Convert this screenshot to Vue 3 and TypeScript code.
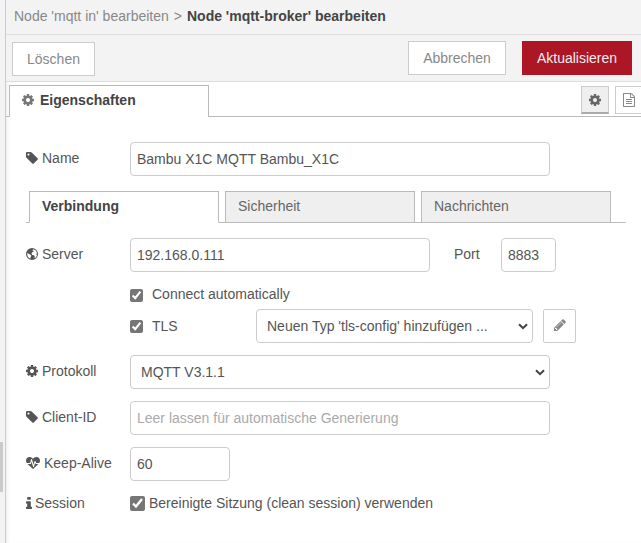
<script setup lang="ts">
import { ref } from 'vue'

interface Icon { box: string; d: string }

const icons: Record<string, Icon> = {
  cog: { box: '0 128 1536 1536', d: 'M1024 896q0-106-75-181t-181-75-181 75-75 181 75 181 181 75 181-75 75-181zm512-109v222q0 12-8 23t-20 13l-185 28q-19 54-39 91 35 50 107 138 10 12 10 25t-9 23q-27 37-99 108t-94 71q-12 0-26-9l-138-108q-44 23-91 38-16 136-29 186-7 28-36 28h-222q-14 0-24.5-8.5t-11.5-21.5l-28-184q-49-16-90-37l-141 107q-10 9-25 9-14 0-25-11-126-114-165-168-7-10-7-23 0-12 8-23 15-21 51-66.500t54-70.500q-27-50-41-99l-183-27q-13-2-21-12.500t-8-23.500v-222q0-12 8-23t19-13l186-28q14-46 39-92-40-57-107-138-10-12-10-24 0-10 9-23 26-36 98.500-107.500t94.500-71.500q13 0 26 10l138 107q44-23 91-38 16-136 29-186 7-28 36-28h222q14 0 24.500 8.500t11.500 21.500l28 184q49 16 90 37l142-107q9-9 24-9 13 0 25 10 129 119 165 170 7 8 7 22 0 12-8 23-15 21-51 66.500t-54 70.500q26 50 41 98l183 28q13 2 21 12.500t8 23.500z' },
  tag: { box: '0 128 1536 1536', d: 'M448 448q0-53-37.500-90.500t-90.500-37.500-90.500 37.500-37.500 90.500 37.500 90.500 90.500 37.500 90.500-37.500 37.500-90.500zm1067 576q0 53-37 90l-491 492q-39 37-91 37-53 0-90-37l-715-716q-38-37-64.500-101t-26.500-117v-416q0-52 38-90t90-38h416q53 0 117 26.500t102 64.500l715 714q37 39 37 91z' },
  globe: { box: '0 0 24 24', d: 'M12 0a12 12 0 1 0 0 24a12 12 0 1 0 0-24zM15 2.400L20 5.500L22 10L20.500 12.500L22 15L19 19.500L17 20.500L17.500 17L16 14.500L12.500 14L11 11L13 8L16 7L14.500 5.500L13 5L13.500 3.500zM3.200 10L5 11.500L8 13L10.500 15L10 17L9 18.500L8.500 21.500L5.500 19.500L3.300 16.500L2.300 12.500z' },
  pencil: { box: '0 128 1536 1536', d: 'M363 1536l91-91-235-235-91 91v107h128v128h107zm523-928q0-22-22-22-10 0-17 7l-542 542q-7 7-7 17 0 22 22 22 10 0 17-7l542-542q7-7 7-17zm-54-192l416 416-832 832h-416v-416zm683 96q0 53-37 90l-166 166-416-416 166-165q36-38 90-38 53 0 91 38l235 234q37 39 37 91z' },
  doc: { box: '0 0 1536 1792', d: 'M1468 380q28 28 48 76t20 88v1152q0 40-28 68t-68 28h-1344q-40 0-68-28t-28-68v-1600q0-40 28-68t68-28h896q40 0 88 20t76 48zm-444-244v376h376q-10-29-22-41l-313-313q-12-12-41-22zm384 1528v-1024h-416q-40 0-68-28t-28-68v-416h-768v1536h1280zm-1024-864q0-14 9-23t23-9h704q14 0 23 9t9 23v64q0 14-9 23t-23 9h-704q-14 0-23-9t-9-23v-64zm736 224q14 0 23 9t9 23v64q0 14-9 23t-23 9h-704q-14 0-23-9t-9-23v-64q0-14 9-23t23-9h704zm0 256q14 0 23 9t9 23v64q0 14-9 23t-23 9h-704q-14 0-23-9t-9-23v-64q0-14 9-23t23-9h704z' },
  info: { box: '0 128 640 1408', d: 'M640 1344v128q0 26-19 45t-45 19h-512q-26 0-45-19t-19-45v-128q0-26 19-45t45-19h64v-384h-64q-26 0-45-19t-19-45v-128q0-26 19-45t45-19h384q26 0 45 19t19 45v576h64q26 0 45 19t19 45zm-128-1152v192q0 26-19 45t-45 19h-256q-26 0-45-19t-19-45v-192q0-26 19-45t45-19h256q26 0 45 19t19 45z' },
  heart: { box: '0 128 1792 1536', d: 'M1280 1024h305q-5 6-10 10.500t-9 7.500l-3 4-623 600q-18 18-44 18t-44-18l-624-602q-5-2-21-20h369q22 0 39.500-13.500t22.500-34.500l70-281 190 667q6 20 23 33t39 13q21 0 38-13t23-33l146-485 56 112q18 35 57 35zm512-428q0 145-103 300h-369l-111-221q-8-17-25.500-27t-36.500-8q-45 5-56 46l-129 430-196-686q-6-20-23.500-33t-39.500-13-39 13.500-22 34.500l-116 464h-423q-103-155-103-300 0-220 127-344t351-124q62 0 126.500 21.500t120 58 95.500 68.500 76 68q36-36 76-68t95.500-68.500 120-58 126.500-21.500q224 0 351 124t127 344z' },
}

const tabs = ['Verbindung', 'Sicherheit', 'Nachrichten']
const activeTab = ref(0)
const name = ref('Bambu X1C MQTT Bambu_X1C')
const server = ref('192.168.0.111')
const port = ref('8883')
const autoConnect = ref(true)
const useTls = ref(true)
const clientId = ref('')
const keepAlive = ref('60')
const cleanSession = ref(true)
</script>

<template>
  <div class="editor">
    <div class="gutter"><div class="thumb"></div></div>
    <main class="tray">
      <header class="crumbs"><span>Node 'mqtt in' bearbeiten</span><span class="sep">&gt;</span><b>Node 'mqtt-broker' bearbeiten</b></header>
      <div class="toolbar">
        <button class="btn delete">Löschen</button>
        <button class="btn cancel">Abbrechen</button>
        <button class="btn primary">Aktualisieren</button>
      </div>
      <div class="top-tabs">
        <div class="lead"></div>
        <div class="main-tab">
          <svg :viewBox="icons.cog.box" width="12" height="12"><path :d="icons.cog.d" /></svg>Eigenschaften
        </div>
        <div class="rest">
          <button class="mini on"><svg :viewBox="icons.cog.box" width="12" height="12"><path :d="icons.cog.d" /></svg></button>
          <button class="mini"><svg :viewBox="icons.doc.box" width="12" height="14"><path :d="icons.doc.d" /></svg></button>
        </div>
      </div>

      <form class="form" @submit.prevent>
        <div class="row">
          <label class="lbl"><svg :viewBox="icons.tag.box" width="12" height="12"><path :d="icons.tag.d" /></svg>Name</label>
          <input v-model="name" class="field wide" type="text" />
        </div>

        <div class="tabs">
          <div v-for="(t, i) in tabs" :key="t" class="tab" :class="{ active: i === activeTab }" @click="activeTab = i">{{ t }}</div>
        </div>

        <div class="row">
          <label class="lbl"><svg :viewBox="icons.globe.box" width="12" height="12"><path fill-rule="evenodd" :d="icons.globe.d" /></svg>Server</label>
          <input v-model="server" class="field server" type="text" />
          <label class="port-label">Port</label>
          <input v-model="port" class="field port" type="text" />
        </div>
        <div class="row auto">
          <input v-model="autoConnect" type="checkbox" /><label>Connect automatically</label>
        </div>
        <div class="row tls">
          <input v-model="useTls" type="checkbox" /><label>TLS</label>
          <div class="picker">
            <select class="field config"><option>Neuen Typ 'tls-config' hinzufügen ...</option></select>
            <svg class="chevron" viewBox="0 0 10 7" width="10" height="7"><path d="M1 1.200l4 4 4-4" /></svg>
          </div>
          <button class="edit"><svg :viewBox="icons.pencil.box" width="12" height="12"><path :d="icons.pencil.d" /></svg></button>
        </div>
        <div class="row">
          <label class="lbl"><svg :viewBox="icons.cog.box" width="12" height="12"><path :d="icons.cog.d" /></svg>Protokoll</label>
          <div class="picker">
            <select class="field wide"><option>MQTT V3.1.1</option></select>
            <svg class="chevron" viewBox="0 0 10 7" width="10" height="7"><path d="M1 1.200l4 4 4-4" /></svg>
          </div>
        </div>
        <div class="row">
          <label class="lbl"><svg :viewBox="icons.tag.box" width="12" height="12"><path :d="icons.tag.d" /></svg>Client-ID</label>
          <input v-model="clientId" class="field wide" type="text" placeholder="Leer lassen für automatische Generierung" />
        </div>
        <div class="row">
          <label class="lbl"><svg :viewBox="icons.heart.box" width="14" height="12"><path :d="icons.heart.d" /></svg>Keep-Alive</label>
          <input v-model="keepAlive" class="field short" type="text" />
        </div>
        <div class="row session">
          <label class="lbl"><svg :viewBox="icons.info.box" width="6" height="12" preserveAspectRatio="none"><path :d="icons.info.d" /></svg>Session</label>
          <input v-model="cleanSession" class="big" type="checkbox" /><label>Bereinigte Sitzung (clean session) verwenden</label>
        </div>
      </form>
    </main>
  </div>
</template>

<style>
body { margin: 0; overflow: hidden; }
</style>

<style scoped>
* { box-sizing: border-box; }
.editor { display: flex; width: 641px; height: 543px; overflow: hidden; background: #fff; color: #555; font: 14px/20px "Liberation Sans", Arial, sans-serif; }
input, select, button { font: inherit; color: inherit; margin: 0; }
svg { fill: currentColor; display: block; flex: none; }
.gutter { width: 6px; flex: none; background: #f3f3f3; border-right: 1px solid #ccc; padding-top: 442px; }
.thumb { width: 3px; height: 50px; background: #cacaca; }
.tray { flex: 1; min-width: 0; box-shadow: inset 4px 0 5px -4px rgba(0, 0, 0, .12); }
.crumbs { height: 35px; padding: 6px 8px; background: #f3f3f3; border-bottom: 1px solid #ddd; color: #888; display: flex; white-space: nowrap; }
.sep { margin: 0 5px; }
.crumbs b { color: #444; }
.toolbar { height: 47px; background: #f3f3f3; border-bottom: 1px solid #ddd; display: flex; align-items: flex-start; padding: 6px 9px 0 6px; }
.btn { height: 34px; padding: 0; background: #fff; border: 1px solid #ccc; color: #888; }
.delete { width: 83px; margin: 1px auto 0 0; }
.cancel { width: 98px; margin-right: 16px; }
.primary { width: 110px; background: #ad1625; border-color: #ad1625; color: #eee; }
.top-tabs { display: flex; height: 35px; padding-top: 3px; }
.lead { width: 3px; border-bottom: 1px solid #bbb; }
.main-tab { width: 200px; border: 1px solid #bbb; border-bottom: 0; display: flex; align-items: center; gap: 6px; padding: 0 0 3px 12px; font-weight: bold; color: #444; background: #fff; }
.main-tab svg { color: #777; }
.rest { flex: 1; border-bottom: 1px solid #bbb; display: flex; justify-content: flex-end; gap: 6px; padding-top: 1px; }
.mini { width: 28px; height: 28px; flex: none; padding: 0; border: 1px solid #ccc; background: #fff; color: #888; display: flex; align-items: center; justify-content: center; }
.mini:last-child { margin-right: -2px; }
.mini.on { background: #efefef; color: #666; border-bottom: 2px solid #aaa; }
.form { padding: 25px 15px 0 20px; }
.row { display: flex; height: 34px; margin-bottom: 12px; align-items: center; white-space: nowrap; }
.lbl { width: 104px; flex: none; display: flex; align-items: center; gap: 4px; padding-bottom: 2px; }
.field { height: 34px; border: 1px solid #ccc; border-radius: 4px; padding: 4px 6px; background: #fff; outline: none; flex: none; }
.field::placeholder { color: #aaa; opacity: 1; }
.picker { display: grid; align-items: center; flex: none; }
.picker > * { grid-area: 1 / 1; }
.picker select { appearance: none; padding-left: 10px; }
.chevron { justify-self: end; margin: 1px 5px 0 0; pointer-events: none; }
.chevron path { fill: none; stroke: #444; stroke-width: 2; }
.wide { width: 420px; }
.server { width: 300px; }
.port-label { width: 47px; margin-left: 24px; padding-bottom: 2px; }
.port { width: 55px; }
.short { width: 100px; }
.tabs { display: flex; gap: 6px; height: 32px; margin: 15px 0 15px; padding-left: 3px; background: linear-gradient(#bbb, #bbb) bottom / 100% 1px no-repeat; }
.row:has(+ .tabs) { margin-bottom: 0; }
.tab { width: 190px; border: 1px solid #bbb; background: #efefef; padding: 4px 12px; color: #666; }
.tab.active { background: #fff; border-bottom-color: #fff; color: #444; font-weight: bold; }
input[type="checkbox"] { width: 13px; height: 13px; accent-color: #767676; flex: none; }
.auto { height: 20px; margin: 12px 0 5px 104px; }
.auto label, .tls label { margin-left: 9px; }
.auto input { margin-top: 2px; }
.tls { margin-left: 104px; }
.tls label { width: 104px; }
.config { width: 277px; }
.edit { width: 33px; height: 34px; margin-left: 10px; border: 1px solid #ccc; border-radius: 2px; background: #fff; color: #888; display: flex; justify-content: center; align-items: center; padding: 0 0 2px; }
.session { height: 20px; margin-top: 12px; }
.session .lbl { padding: 0; gap: 3px; }
input.big { width: 15px; height: 15px; margin-right: 4px; }
</style>
